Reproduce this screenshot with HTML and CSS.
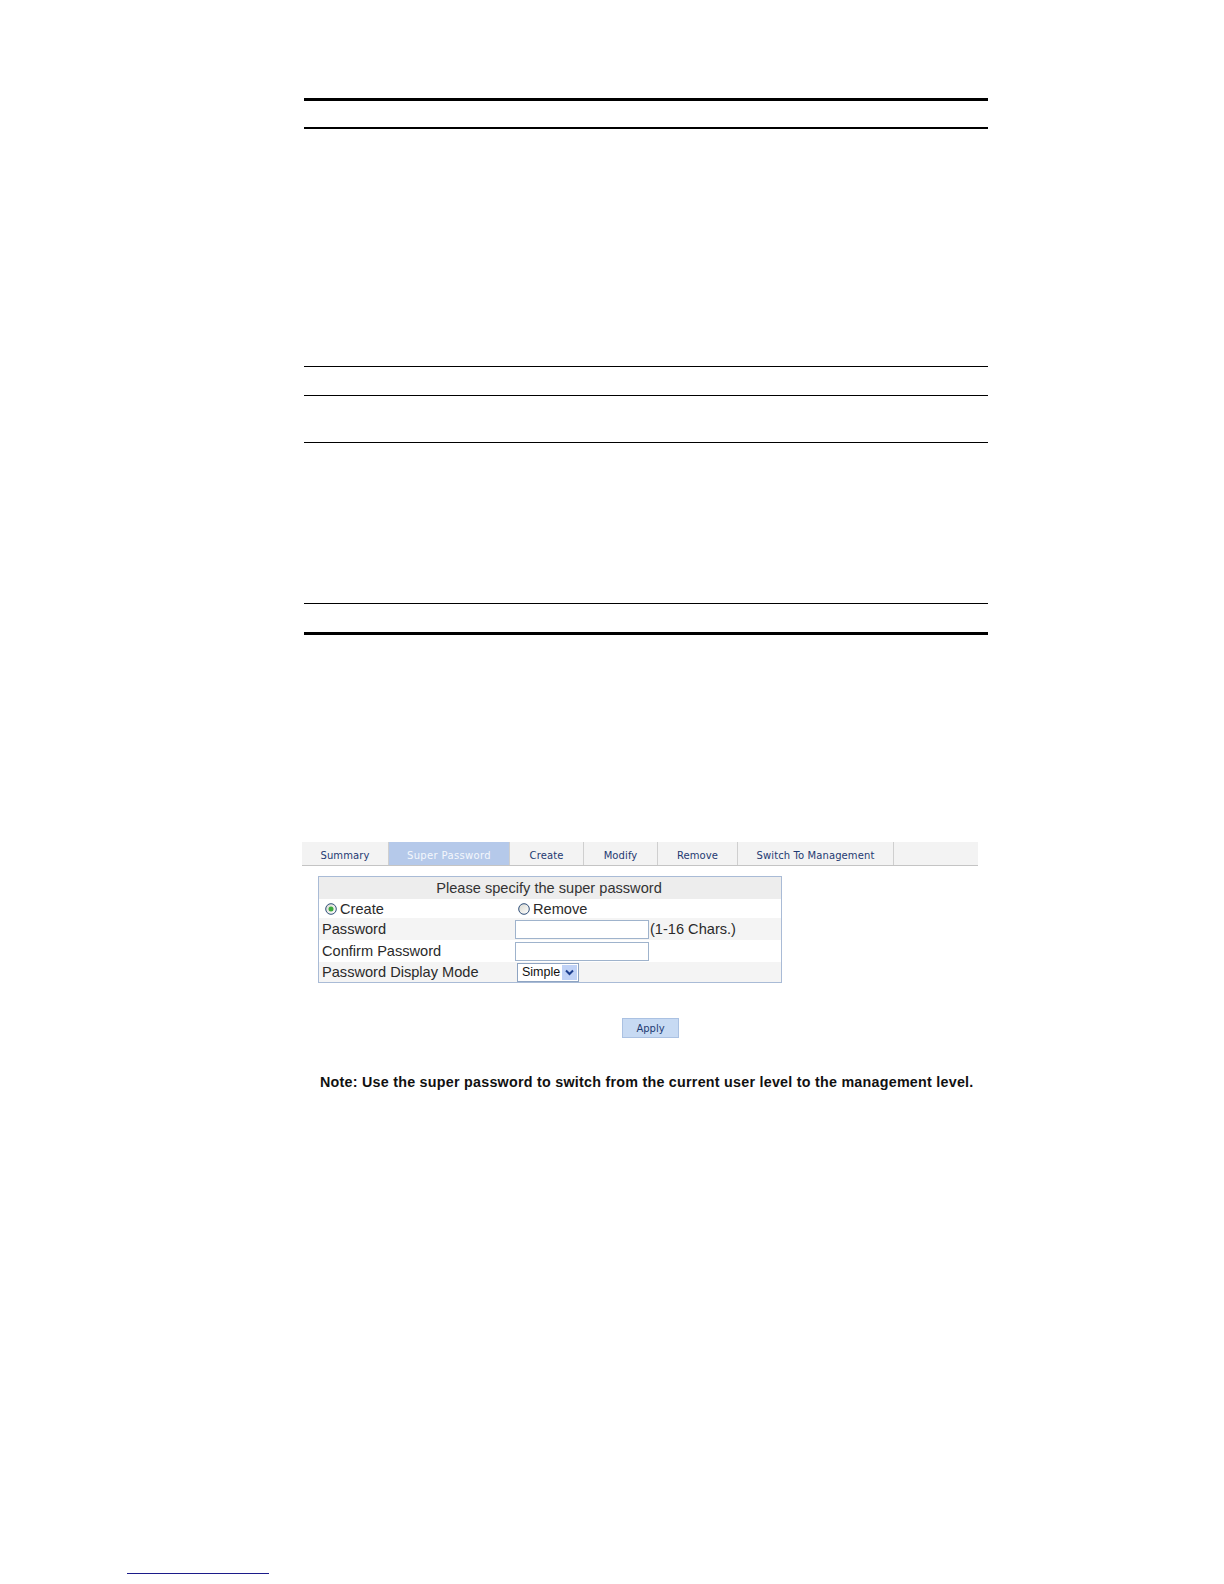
FILE: index.html
```html
<!DOCTYPE html>
<html lang="en">
<head>
<meta charset="utf-8">
<title>Super Password</title>
<link rel="stylesheet" href="styles.css">
</head>
<body>
<div class="page">
  <div class="doc-table">
    <div class="drow r1"></div>
    <div class="drow r2"></div>
    <div class="drow r3"></div>
    <div class="drow r4"></div>
    <div class="drow r5"></div>
    <div class="drow r6"></div>
  </div>

  <div class="ui">
    <div class="tabs">
      <div class="tab t-summary">Summary</div>
      <div class="tab t-super active">Super Password</div>
      <div class="tab t-create">Create</div>
      <div class="tab t-modify">Modify</div>
      <div class="tab t-remove">Remove</div>
      <div class="tab t-switch">Switch To Management</div>
      <div class="tab t-fill"></div>
    </div>

    <div class="form">
      <div class="frow head">Please specify the super password</div>
      <div class="frow white">
        <div class="lab radio-lab">
          <svg class="radio" width="12" height="12" viewBox="0 0 12 12"><defs><linearGradient id="rg1" x1="0" y1="0" x2="1" y2="1"><stop offset="0" stop-color="#d8d8d0"/><stop offset="1" stop-color="#ffffff"/></linearGradient></defs><circle cx="6" cy="6" r="5.3" fill="url(#rg1)" stroke="#2f4f7a" stroke-width="1"/><circle cx="6" cy="6" r="2.5" fill="#3caa3c"/></svg>
          <span>Create</span>
        </div>
        <div class="val radio-val">
          <svg class="radio" width="12" height="12" viewBox="0 0 12 12"><defs><linearGradient id="rg2" x1="0" y1="0" x2="1" y2="1"><stop offset="0" stop-color="#d8d8d0"/><stop offset="1" stop-color="#ffffff"/></linearGradient></defs><circle cx="6" cy="6" r="5.3" fill="url(#rg2)" stroke="#2f4f7a" stroke-width="1"/></svg>
          <span>Remove</span>
        </div>
      </div>
      <div class="frow grey tall">
        <div class="lab">Password</div>
        <div class="val"><span class="input"></span><span class="hint">(1-16 Chars.)</span></div>
      </div>
      <div class="frow white tall">
        <div class="lab">Confirm Password</div>
        <div class="val"><span class="input"></span></div>
      </div>
      <div class="frow grey">
        <div class="lab">Password Display Mode</div>
        <div class="val">
          <span class="select"><span class="sel-text">Simple</span><span class="sel-btn"><svg width="9" height="7" viewBox="0 0 9 7"><path d="M1 1.5 L4.5 5 L8 1.5" fill="none" stroke="#1d3f8f" stroke-width="2"/></svg></span></span>
        </div>
      </div>
    </div>

    <div class="actions"><span class="btn">Apply</span></div>

    <p class="note">Note: Use the super password to switch from the current user level to the management level.</p>
  </div>

  <div class="footline"></div>
</div>
</body>
</html>
```
FILE: styles.css
```css
html, body {
  margin: 0;
  padding: 0;
  background: #ffffff;
}
.page {
  padding-top: 98px;
  font-family: "Liberation Sans", Arial, sans-serif;
}
.doc-table {
  margin-left: 304px;
  width: 684px;
}
.drow { border-bottom: 1px solid #000; }
.r1 { border-top: 3px solid #000; border-bottom: 2px solid #000; height: 26px; }
.r2 { height: 237px; }
.r3 { height: 28px; }
.r4 { height: 46px; }
.r5 { height: 160px; }
.r6 { height: 28px; border-bottom: 3px solid #000; }

.ui {
  margin-left: 302px;
  width: 676px;
  margin-top: 207px;
}
.tabs {
  display: flex;
  height: 23px;
  border-bottom: 1px solid #c4c4c4;
  background: #f3f3f3;
}
.tab {
  box-sizing: border-box;
  border-right: 1px solid #cfcfcf;
  font-family: "DejaVu Sans", Verdana, sans-serif;
  font-size: 10px;
  color: #1e3a72;
  display: flex;
  align-items: flex-end;
  justify-content: center;
  padding-bottom: 4px;
  letter-spacing: 0.1px;
}
.tab.active { background: #b5c9ea; color: #f4f7fc; letter-spacing: 0.35px; }
.t-summary { width: 87px; }
.t-super { width: 121px; }
.t-create { width: 74px; }
.t-modify { width: 74px; }
.t-remove { width: 80px; }
.t-switch { width: 156px; }
.t-fill { flex: 1; border-right: none; }

.form {
  margin-left: 16px;
  margin-top: 10px;
  width: 464px;
  box-sizing: border-box;
  border: 1px solid #a9bbd6;
  font-size: 14.6px;
  color: #2a2a2a;
}
.frow {
  display: flex;
  align-items: center;
  height: 20px;
}
.frow.tall { height: 22px; }
.frow.head {
  height: 22px;
  justify-content: center;
  background: #ededed;
  color: #333;
  padding-right: 2px;
}
.frow.white { background: #ffffff; height: 19px; }
.frow.white.tall { height: 22px; }
.frow.grey { background: #f4f4f4; }
.lab {
  width: 196px;
  padding-left: 3px;
  box-sizing: border-box;
  display: flex;
  align-items: center;
}
.val {
  display: flex;
  align-items: center;
}
.radio-lab { padding-left: 6px; }
.radio-val { padding-left: 3px; }
.radio { margin-right: 3px; flex: none; }
.input {
  display: block;
  width: 134px;
  height: 19px;
  box-sizing: border-box;
  border: 1px solid #9fb3cc;
  background: #fff;
}
.hint { margin-left: 1px; }
.select {
  margin-left: 2px;
  display: flex;
  align-items: center;
  width: 62px;
  height: 19px;
  box-sizing: border-box;
  border: 1px solid #8ea4c2;
  background: #fff;
  padding: 1px;
}
.sel-text {
  flex: 1;
  font-size: 12.5px;
  color: #111;
  padding-left: 3px;
}
.sel-btn {
  width: 15px;
  height: 15px;
  background: #c0d2f6;
  display: flex;
  align-items: center;
  justify-content: center;
}

.actions {
  margin-top: 35px;
  display: flex;
  padding-left: 320px;
}
.btn {
  width: 57px;
  height: 20px;
  box-sizing: border-box;
  background: #c7daf3;
  border: 1px solid #aac1e2;
  font-family: "DejaVu Sans", Verdana, sans-serif;
  font-size: 10px;
  color: #1e3a72;
  display: flex;
  align-items: center;
  justify-content: center;
}
.note {
  margin: 36px 0 0 18px;
  font-size: 14.3px;
  font-weight: bold;
  letter-spacing: 0.25px;
  color: #111;
  white-space: nowrap;
}
.footline {
  margin-left: 127px;
  width: 142px;
  height: 0;
  border-top: 1px solid #1c1c8a;
  margin-top: 483px;
}
```
